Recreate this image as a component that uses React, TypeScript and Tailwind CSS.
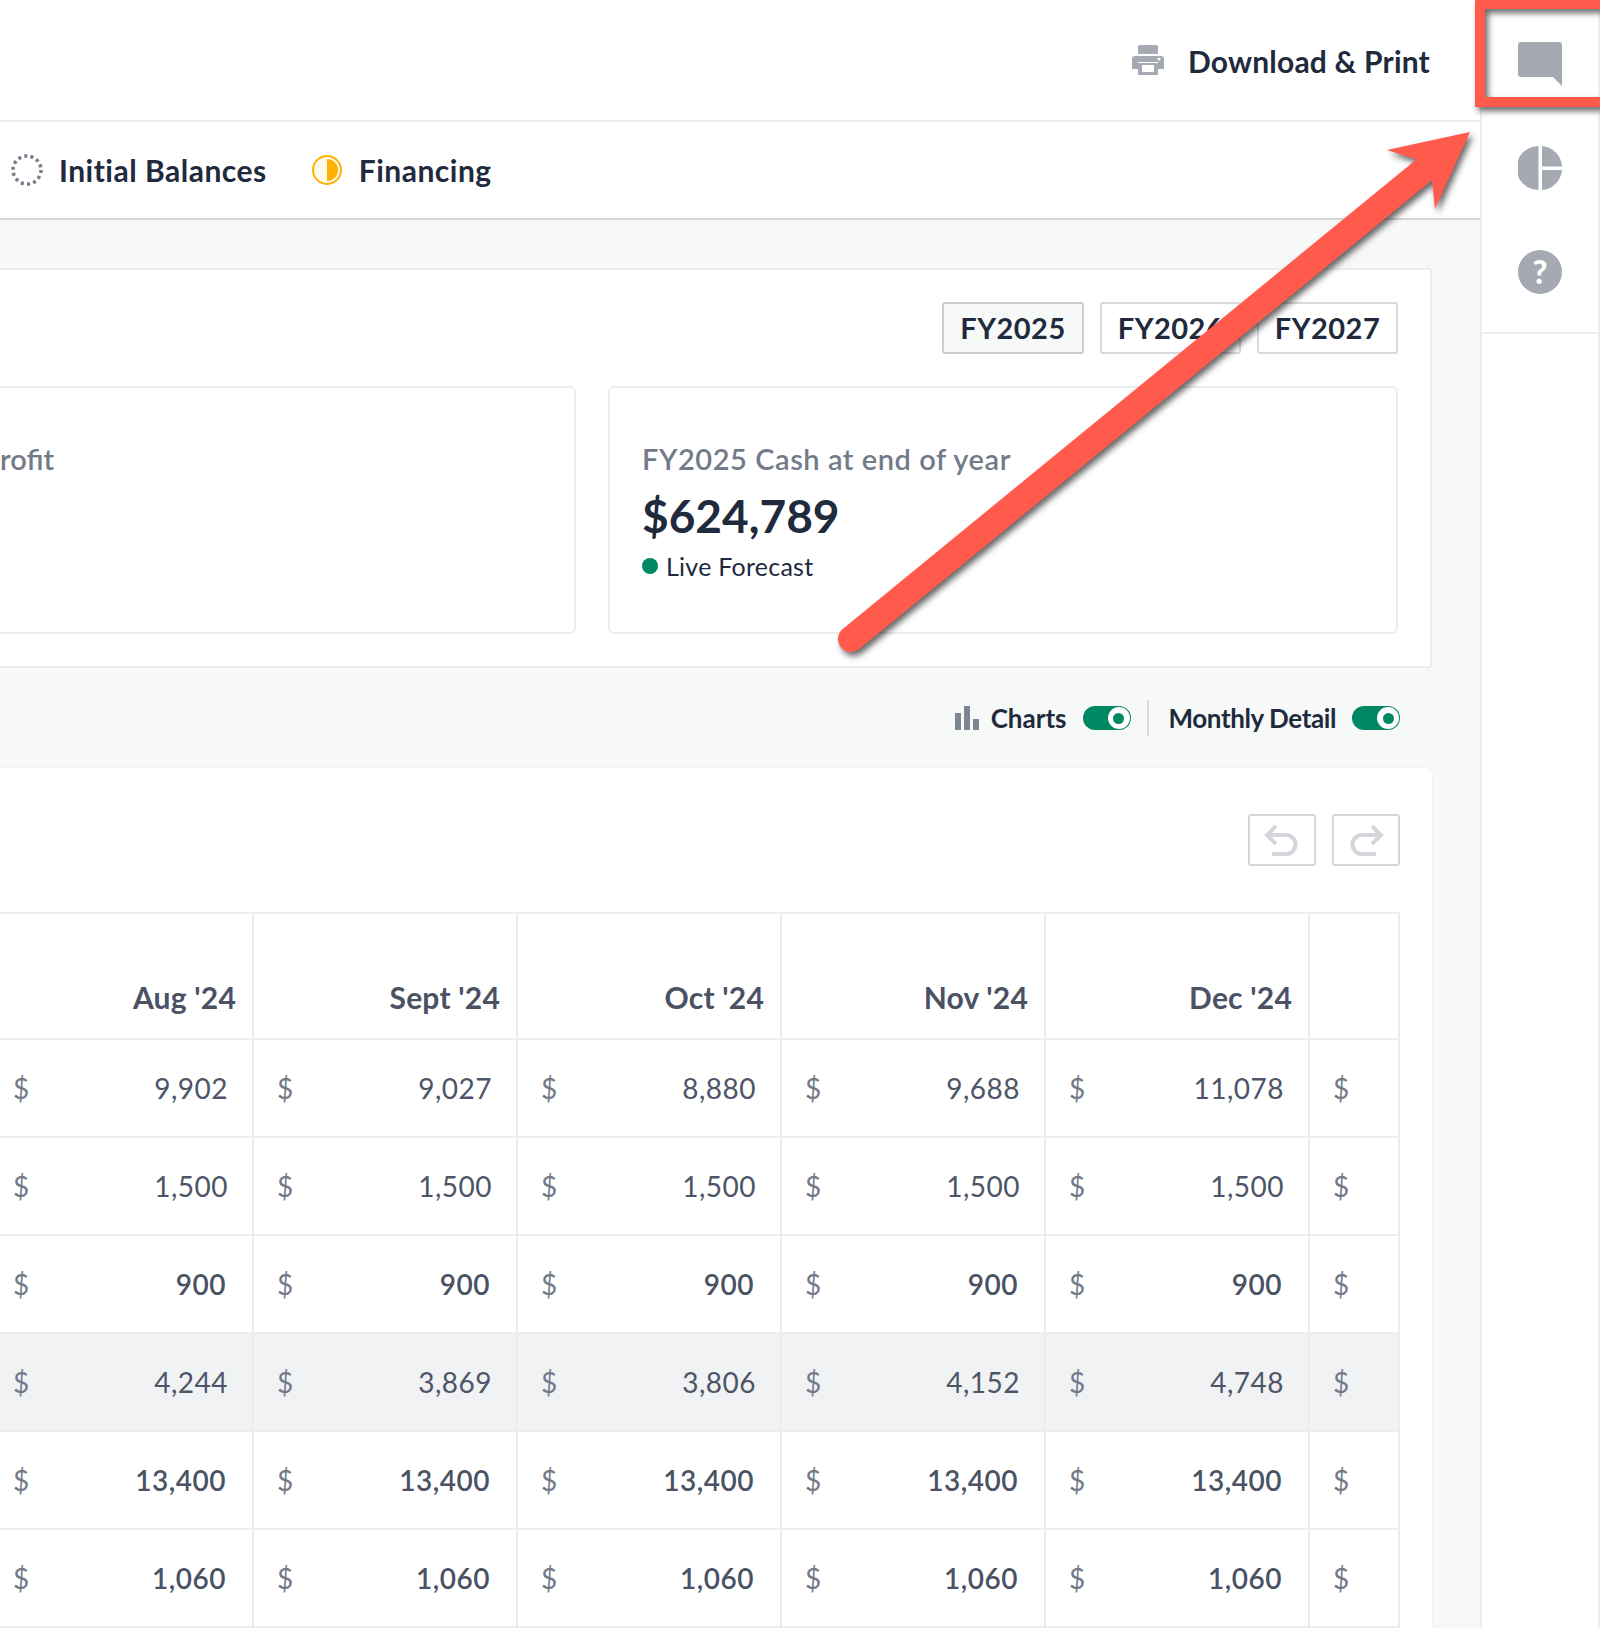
import React from "react";

const months = ["Aug '24", "Sept '24", "Oct '24", "Nov '24", "Dec '24"];
const rows: { v: string[]; strong?: boolean; mid?: boolean; hi?: boolean }[] = [
  { v: ["9,902", "9,027", "8,880", "9,688", "11,078"] },
  { v: ["1,500", "1,500", "1,500", "1,500", "1,500"] },
  { v: ["900", "900", "900", "900", "900"], mid: true },
  { v: ["4,244", "3,869", "3,806", "4,152", "4,748"], hi: true },
  { v: ["13,400", "13,400", "13,400", "13,400", "13,400"], strong: true },
  { v: ["1,060", "1,060", "1,060", "1,060", "1,060"], strong: true },
];

function Toggle() {
  return (
    <div className="w-[48px] h-[24px] rounded-full bg-[#008763] flex items-center justify-end pr-[1px]">
      <div className="w-[22px] h-[22px] rounded-full bg-white flex items-center justify-center">
        <div className="w-[11px] h-[11px] rounded-full bg-[#008763]" />
      </div>
    </div>
  );
}

function FyButton({ label, active }: { label: string; active?: boolean }) {
  return (
    <div
      className={
        "h-[52px] rounded-[3px] border-2 flex items-center justify-center text-[29px] font-bold text-[#1f2a3d] tracking-[0.5px] " +
        (active ? "w-[142px] bg-[#f7f8f8] border-[#c9cbd1]" : "w-[141px] bg-white border-[#d9dade]")
      }
    >
      {label}
    </div>
  );
}

function Row({ r }: { r: (typeof rows)[number] }) {
  const text = r.strong
    ? "font-semibold text-[#4a5264] pr-[26px]"
    : r.mid
      ? "font-semibold text-[#4a5264] pr-[26px]"
      : "text-[#4d5567] pr-[24px]";
  return (
    <div className={"flex h-[98px] border-b-2 border-[#ebecee] " + (r.hi ? "bg-[#f1f2f4]" : "")}>
      {r.v.map((v, i) => (
        <div key={i} className="w-[264px] shrink-0 border-r-2 border-[#ebecee] flex items-center justify-between pl-[23px]">
          <span className="text-[28px] text-[#737a88]">$</span>
          <span className={"text-[28px] tracking-[0.5px] " + text}>{v}</span>
        </div>
      ))}
      <div className="flex-1 flex items-center pl-[23px]">
        <span className="text-[28px] text-[#737a88]">$</span>
      </div>
    </div>
  );
}

export default function App() {
  return (
    <div className="relative w-[1600px] h-[1628px] overflow-hidden flex bg-white font-['Lato','Liberation_Sans',sans-serif]">
      <main className="w-[1480px] shrink-0 flex flex-col">
        <header className="h-[122px] shrink-0 border-b-2 border-[#ebecee] flex items-center justify-end pr-[50px] pt-[3px] gap-[24px]">
          <svg width="32" height="30" viewBox="0 0 32 30" className="-mt-[3px]">
            <rect x="6" y="0" width="20" height="9" rx="1.5" fill="#a5a9b2" />
            <path d="M3 11h26a3 3 0 0 1 3 3v10H26v-7H6v7H0V14a3 3 0 0 1 3-3z" fill="#a5a9b2" />
            <path d="M6 18h20v12H6z" fill="#a5a9b2" />
            <rect x="10" y="20" width="12" height="7" fill="#fff" />
            <circle cx="27" cy="14" r="1.5" fill="#fff" />
          </svg>
          <span className="text-[30px] font-bold text-[#1f2a3d] tracking-[0.2px]">Download &amp; Print</span>
        </header>
        <nav className="h-[98px] shrink-0 border-b-2 border-[#d5d6db] flex items-center pl-[11px]">
          <svg width="32" height="32" viewBox="0 0 32 32" className="mr-[16px]">
            <circle cx="16" cy="16" r="14" fill="none" stroke="#747b89" strokeWidth="3.5" strokeDasharray="3 3.28" />
          </svg>
          <span className="text-[30px] font-bold text-[#1f2a3d] tracking-[0.5px]">Initial Balances</span>
          <svg width="30" height="32" viewBox="0 0 30 32" className="ml-[45px] mr-[17px]">
            <circle cx="15" cy="16" r="14" fill="#fff9ec" stroke="#ffb000" strokeWidth="2" />
            <path d="M15 5a11 11 0 0 1 0 22z" fill="#ffb000" />
          </svg>
          <span className="text-[30px] font-bold text-[#1f2a3d] tracking-[0.5px]">Financing</span>
        </nav>
        <div className="flex-1 bg-[#f7f9f8] overflow-hidden pr-[48px] pt-[48px]">
          <section className="ml-[-20px] h-[400px] bg-white border-2 border-[#ebecee] rounded-[3px] pt-[32px] pr-[32px] flex flex-col">
            <div className="flex justify-end gap-[16px]">
              <FyButton label="FY2025" active />
              <FyButton label="FY2026" />
              <FyButton label="FY2027" />
            </div>
            <div className="flex gap-[32px] mt-[32px] h-[248px]">
              <div className="flex-1 border-2 border-[#ebecee] rounded-[6px] pt-[54px] pl-[16px]">
                <div className="text-[29px] leading-[34px] text-[#737a88] font-semibold">rofit</div>
              </div>
              <div className="w-[790px] shrink-0 border-2 border-[#ebecee] rounded-[6px] pt-[54px] pl-[32px]">
                <div className="text-[29px] leading-[34px] font-semibold text-[#737a88] tracking-[0.55px]">FY2025 Cash at end of year</div>
                <div className="text-[46px] leading-[56px] mt-[12px] font-bold text-[#1f2a3d]">$624,789</div>
                <div className="flex items-center gap-[8px] mt-[6px]">
                  <div className="w-[16px] h-[16px] rounded-full bg-[#008763]" />
                  <span className="text-[25px] leading-[32px] text-[#1f2a3d] tracking-[0.25px]">Live Forecast</span>
                </div>
              </div>
            </div>
          </section>
          <div className="h-[100px] flex items-center justify-end pr-[32px]">
            <svg width="24" height="24" viewBox="0 0 24 24" className="mr-[12px]">
              <rect x="0" y="7" width="6" height="17" fill="#7d8492" />
              <rect x="9" y="0" width="6" height="24" fill="#7d8492" />
              <rect x="18" y="13" width="6" height="11" fill="#7d8492" />
            </svg>
            <span className="text-[26px] font-bold text-[#1f2a3d] mr-[16px]">Charts</span>
            <Toggle />
            <div className="w-[2px] h-[36px] bg-[#d9dade] mx-[16px]" />
            <span className="text-[26px] font-bold text-[#1f2a3d] tracking-[-0.4px] ml-[4px] mr-[16px]">Monthly Detail</span>
            <Toggle />
          </div>
          <section className="ml-[-20px] h-[900px] bg-white rounded-[8px] shadow-[0_0_4px_rgba(0,0,0,0.06)] pt-[46px] pr-[32px]">
            <div className="flex justify-end gap-[16px]">
              <div className="w-[68px] h-[52px] border-2 border-[#d5d6db] rounded-[3px]">
                <svg width="64" height="48" viewBox="2 2 64 48" fill="none" stroke="#d5d6db" strokeWidth="4">
                  <path d="M28 12l-9 9 9 9M19 21h19a9.5 9.5 0 0 1 0 19H24" />
                </svg>
              </div>
              <div className="w-[68px] h-[52px] border-2 border-[#d5d6db] rounded-[3px]">
                <svg width="64" height="48" viewBox="2 2 64 48" fill="none" stroke="#d5d6db" strokeWidth="4">
                  <path d="M40 12l9 9-9 9M49 21H30a9.5 9.5 0 0 0 0 19h14" />
                </svg>
              </div>
            </div>
            <div className="ml-[10px] mt-[46px] border-t-2 border-r-2 border-[#ebecee]">
              <div className="flex h-[126px] border-b-2 border-[#ebecee]">
                {months.map((m) => (
                  <div key={m} className="w-[264px] shrink-0 border-r-2 border-[#ebecee] flex items-end justify-end pr-[16px] pb-[18px]">
                    <span className="text-[30px] font-bold text-[#4a5264] tracking-[0.2px]">{m}</span>
                  </div>
                ))}
              </div>
              {rows.map((r, i) => (
                <Row key={i} r={r} />
              ))}
            </div>
          </section>
        </div>
      </main>
      <aside className="w-[120px] shrink-0 border-l-2 border-r-2 border-[#ebecee]">
        <div className="h-[334px] border-b-2 border-[#ebecee] pt-[42px] flex flex-col items-center gap-[60px]">
          <svg width="44" height="44" viewBox="0 0 44 44">
            <path d="M3 0h38a3 3 0 0 1 3 3v41l-9-9H3a3 3 0 0 1-3-3V3a3 3 0 0 1 3-3z" fill="#a5a9b2" />
          </svg>
          <svg width="44" height="44" viewBox="0 0 44 44">
            <path d="M20.5 0a22 22 0 0 0 0 44z" fill="#a5a9b2" />
            <path d="M24 0A22 22 0 0 1 44 20.5H24z" fill="#a5a9b2" />
            <path d="M24 24H44A22 22 0 0 1 24 44z" fill="#a5a9b2" />
          </svg>
          <div className="w-[44px] h-[44px] rounded-full bg-[#a5a9b2] flex items-center justify-center text-white text-[32px] font-black">?</div>
        </div>
      </aside>
      <svg className="absolute left-0 top-0 pointer-events-none drop-shadow-[3px_4px_3px_rgba(0,0,0,0.6)]" width="1600" height="1628" viewBox="0 0 1600 1628">
        <rect x="1480" y="4" width="125" height="98" fill="none" stroke="#ff5a4c" strokeWidth="10" />
        <path d="M851 639 L1424 170" stroke="#ff5a4c" strokeWidth="26" strokeLinecap="round" fill="none" />
        <path d="M1470 132 L1387 150 L1415 159 L1432 180 L1435 209 Z" fill="#ff5a4c" />
      </svg>
    </div>
  );
}
